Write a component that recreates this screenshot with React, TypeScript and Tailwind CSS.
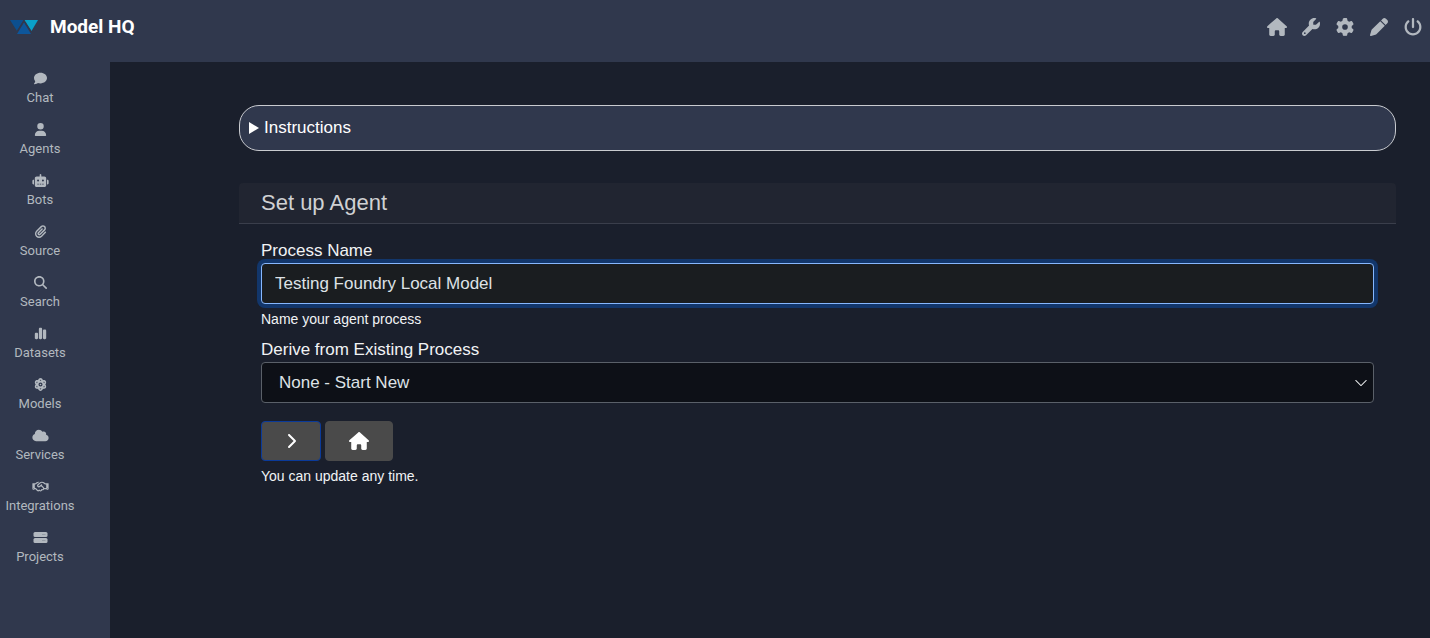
import clsx from "clsx";
import type { FC } from "react";
import { useState } from "react";
import type { IconType } from "react-icons";
import { BsChevronDown } from "react-icons/bs";
import {
  FaAtom,
  FaChartSimple,
  FaChevronRight,
  FaCloud,
  FaComment,
  FaGear,
  FaHouse,
  FaMagnifyingGlass,
  FaPaperclip,
  FaPen,
  FaPowerOff,
  FaRegHandshake,
  FaRobot,
  FaUser,
  FaWrench,
} from "react-icons/fa6";

const Logo: FC = () => (
  <svg viewBox="0 0 28 16" className="w-7 h-4" aria-hidden="true">
    <path d="M0 1h13.5L7 12z" fill="#0c4f8f" />
    <path d="M14.5 1H28l-6.5 11z" fill="#0aa0c8" />
    <path d="M14 3.5l7 11.5H7z" fill="#0d569b" />
    <path d="M14.2 1.2L6.8 12.6M14 2l7.4 11" stroke="#30384d" strokeWidth="1" />
  </svg>
);

const ServerIcon: FC<{ className?: string }> = ({ className }) => (
  <svg viewBox="0 0 17 13" fill="currentColor" className={className} aria-hidden="true">
    <rect x="1.5" y="1" width="14" height="5" rx="1.5" />
    <rect x="1.5" y="7" width="14" height="5" rx="1.5" />
    <path d="M10 3.5h3.5M10 9.5h3.5" stroke="#8d949e" strokeWidth="0.8" />
  </svg>
);

const menuItems: { label: string; icon: IconType | typeof ServerIcon }[] = [
  { label: "Chat", icon: FaComment },
  { label: "Agents", icon: FaUser },
  { label: "Bots", icon: FaRobot },
  { label: "Source", icon: FaPaperclip },
  { label: "Search", icon: FaMagnifyingGlass },
  { label: "Datasets", icon: FaChartSimple },
  { label: "Models", icon: FaAtom },
  { label: "Services", icon: FaCloud },
  { label: "Integrations", icon: FaRegHandshake },
  { label: "Projects", icon: ServerIcon },
];

const toolItems: { label: string; icon: IconType }[] = [
  { label: "Home", icon: FaHouse },
  { label: "Tools", icon: FaWrench },
  { label: "Settings", icon: FaGear },
  { label: "Edit", icon: FaPen },
  { label: "Power", icon: FaPowerOff },
];

const Header: FC = () => (
  <header className="flex justify-between items-center pr-[7px] pb-2 pl-2.5 h-[62px] bg-[#30384d]">
    <a href="#" className="flex gap-3 items-center">
      <Logo />
      <span className="font-[Roboto,sans-serif] text-[19px] font-bold text-white">Model HQ</span>
    </a>
    <nav className="flex gap-3.5 items-center text-[#b2b8bf]">
      {toolItems.map(({ label, icon: Icon }) => (
        <a key={label} href="#" aria-label={label}>
          <Icon className="w-5 h-[18px]" />
        </a>
      ))}
    </nav>
  </header>
);

const Sidebar: FC = () => (
  <nav className="flex flex-col gap-4 items-start pt-2.5 w-[110px] bg-[#30384d] shrink-0">
    {menuItems.map(({ label, icon: Icon }) => (
      <a
        key={label}
        href="#"
        className="flex flex-col gap-1 items-center w-20 font-[Roboto,sans-serif] text-[13px] leading-[18px] text-[#b2b8bf]"
      >
        <Icon className="w-[17px] h-[13px]" />
        {label}
      </a>
    ))}
  </nav>
);

const fieldStyle = "block w-full h-[41px] rounded-sm border text-[17px] text-[#dee2e6] outline-none";
const buttonStyle = "flex justify-center items-center h-10 text-white bg-[#4a4a4a] rounded-sm border";

const App: FC = () => {
  const [name, setName] = useState("Testing Foundry Local Model");

  return (
    <div className="flex flex-col min-h-screen bg-[#1a1f2c] font-['Liberation_Sans',Arial,sans-serif] text-[#f1f3f5]">
      <Header />
      <div className="flex grow">
        <Sidebar />
        <main className="pt-[43px] pr-[34px] pl-[129px] grow">
          <details className="group px-2 bg-[#30384d] rounded-[20px] border border-[#c9cbd0]">
            <summary className="flex gap-1 items-center text-[17px] leading-[44px] text-white list-none cursor-pointer">
              <svg viewBox="0 0 10 12" className="w-3 h-3 group-open:rotate-90" aria-hidden="true">
                <path d="M0 0l10 6-10 6z" fill="currentColor" />
              </svg>
              Instructions
            </summary>
            <p className="px-2 pb-3 text-sm">Name the process, then choose a starting point.</p>
          </details>

          <section className="mt-8">
            <h1 className="px-[22px] h-[41px] text-[22px] leading-10 text-[#d0d1d3] bg-[#212531] rounded-t-sm border-b border-[#3a3e4b]">
              Set up Agent
            </h1>
            <form className="px-[22px] pt-[15px]" onSubmit={(e) => e.preventDefault()}>
              <label htmlFor="process-name" className="block text-[17px] leading-6">
                Process Name
              </label>
              <input
                id="process-name"
                type="text"
                value={name}
                onChange={(e) => setName(e.target.value)}
                className={clsx(fieldStyle, "px-[13px] bg-[#1a1d20] border-[#86b7fe] ring-4 ring-[#12366b]")}
              />
              <p className="pt-1 text-sm leading-[22px]">Name your agent process</p>

              <label htmlFor="base-process" className="block pt-2 text-[17px] leading-6">
                Derive from Existing Process
              </label>
              <div className="relative">
                <select
                  id="base-process"
                  className={clsx(fieldStyle, "px-[17px] bg-[#0d1017] border-[#5a6069] appearance-none")}
                >
                  <option>None - Start New</option>
                </select>
                <BsChevronDown className="absolute top-3.5 right-1.5 w-3.5 h-3.5 pointer-events-none" />
              </div>

              <div className="flex gap-1 mt-[18px]">
                <button type="submit" aria-label="Next" className={clsx(buttonStyle, "w-[60px] border-[#0a3a9a]")}>
                  <FaChevronRight className="w-4 h-4" />
                </button>
                <button type="button" aria-label="Home" className={clsx(buttonStyle, "w-[68px] border-[#4a4a4a]")}>
                  <FaHouse className="w-5 h-[18px]" />
                </button>
              </div>
              <p className="pt-1 text-sm leading-[22px]">You can update any time.</p>
            </form>
          </section>
        </main>
      </div>
    </div>
  );
};

export default App;
